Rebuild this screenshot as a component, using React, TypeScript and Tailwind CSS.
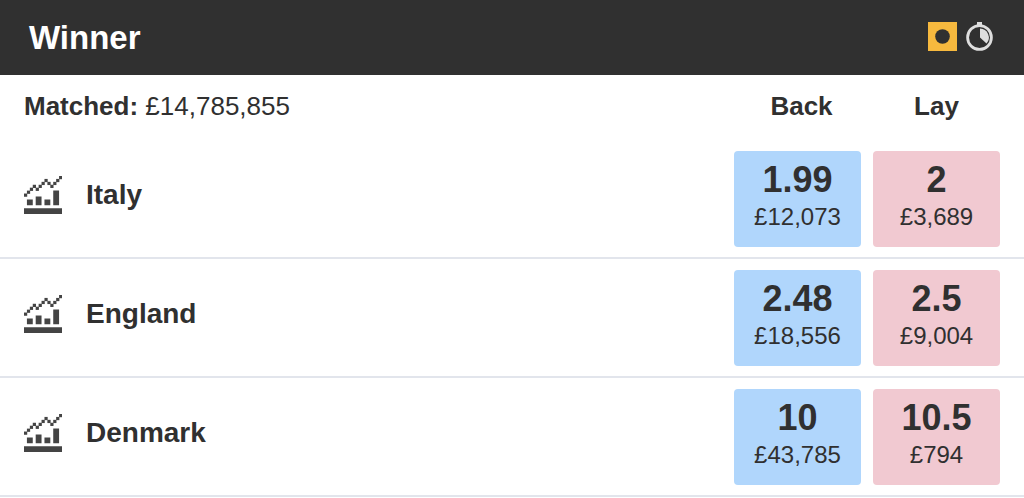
type Offer = { price: string; size: string };
type Runner = { name: string; back: Offer; lay: Offer };

const MATCHED = "£14,785,855";

const RUNNERS: Runner[] = [
  {
    name: "Italy",
    back: { price: "1.99", size: "£12,073" },
    lay: { price: "2", size: "£3,689" },
  },
  {
    name: "England",
    back: { price: "2.48", size: "£18,556" },
    lay: { price: "2.5", size: "£9,004" },
  },
  {
    name: "Denmark",
    back: { price: "10", size: "£43,785" },
    lay: { price: "10.5", size: "£794" },
  },
];

/* Row of the trend line dot in each of the 13 icon columns */
const TREND = [6, 5, 4, 3, 4, 3, 2, 1, 2, 3, 2, 1, 0];

function ChartIcon() {
  return (
    <svg width="38" height="38" viewBox="0 0 13 13" fill="#444444" aria-hidden="true">
      {TREND.map((y, x) => (
        <rect key={x} x={x} y={y} width="1.1" height="1.1" />
      ))}
      <path d="M1 8h2v2H1zM4 7h2v3H4zM7 8h2v2H7zM10 5h2v5h-2zM0 11h13v2H0z" />
    </svg>
  );
}

function CashOutIcon() {
  return (
    <svg width="29" height="29" viewBox="0 0 29 29" aria-hidden="true">
      <rect width="29" height="29" fill="#f7b93e" />
      <circle cx="14.5" cy="14.5" r="7.3" fill="#303030" />
    </svg>
  );
}

function TimerIcon() {
  return (
    <svg width="27" height="29" viewBox="0 0 27 29" aria-hidden="true">
      <rect x="11" y="0" width="5" height="3" fill="#dedede" />
      <circle cx="13.5" cy="15.5" r="11.9" fill="none" stroke="#dedede" strokeWidth="2.8" />
      <path d="M14 6.5A9 9 0 0 1 20.5 21.5L14 15.5z" fill="#dedede" />
    </svg>
  );
}

function OfferButton({ offer, side }: { offer: Offer; side: "back" | "lay" }) {
  return (
    <button
      type="button"
      className={`flex h-24 w-full flex-col items-center justify-center rounded pb-1 ${
        side === "back" ? "bg-[#b0d6fc]" : "bg-[#f1c9d1]"
      }`}
    >
      <span className="text-[36px] leading-10 font-bold">{offer.price}</span>
      <span className="text-2xl leading-[34px]">{offer.size}</span>
    </button>
  );
}

export default function App() {
  return (
    <main className="w-full bg-white font-['Liberation_Sans',Arial,sans-serif] text-[#303030]">
      {/* Market header */}
      <header className="flex h-[75px] items-center justify-between bg-[#303030] pr-[31px] pl-[29px]">
        <h1 className="text-[33px] leading-10 font-bold text-white">Winner</h1>
        <div className="flex items-center gap-[9px] pb-0.5">
          <button type="button" aria-label="Cash out available">
            <CashOutIcon />
          </button>
          <button type="button" aria-label="Going in-play">
            <TimerIcon />
          </button>
        </div>
      </header>

      {/* Prices */}
      <table className="w-full table-fixed border-separate border-spacing-0">
        <colgroup>
          <col />
          <col className="w-[139px]" />
          <col className="w-[163px]" />
        </colgroup>
        <thead>
          <tr className="h-[65px] text-[26px] leading-8">
            <th className="pt-[15px] pl-6 text-left align-top font-normal">
              <b>Matched:</b> {MATCHED}
            </th>
            <th className="pt-[15px] pl-5 align-top">Back</th>
            <th className="pt-[15px] pr-6 pl-3 align-top">Lay</th>
          </tr>
        </thead>
        <tbody>
          {RUNNERS.map((r) => (
            <tr key={r.name}>
              <th
                scope="row"
                className="border-b-2 border-[#e2e5ec] pb-2 pl-6 text-left text-[28px] leading-9"
              >
                <div className="flex items-center gap-6">
                  <button type="button" aria-label={`${r.name} price history`}>
                    <ChartIcon />
                  </button>
                  {r.name}
                </div>
              </th>
              <td className="border-b-2 border-[#e2e5ec] pt-[11px] pb-2.5 pl-3">
                <OfferButton offer={r.back} side="back" />
              </td>
              <td className="border-b-2 border-[#e2e5ec] pt-[11px] pr-6 pb-2.5 pl-3">
                <OfferButton offer={r.lay} side="lay" />
              </td>
            </tr>
          ))}
        </tbody>
      </table>
    </main>
  );
}
